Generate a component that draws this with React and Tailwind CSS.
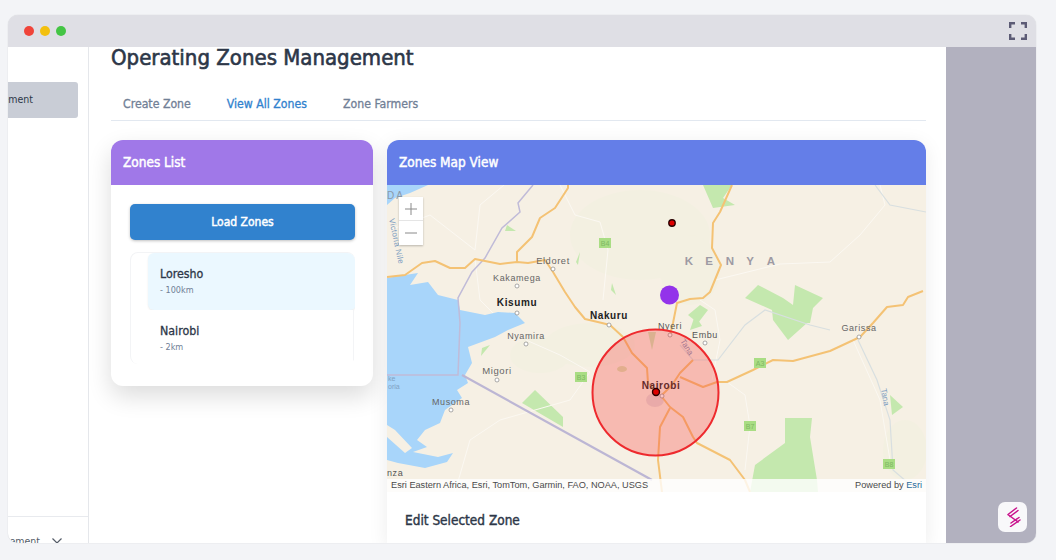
import React from 'react';

const roads = [
  'M387 277 L405 275 L422 263 L435 261 L450 268 L465 268 L475 259 L485 261 L500 264 L517 262 L528 263 L545 260 L553 272 L565 292 L575 307 L585 319 L602 323 L610 325 L623 337 L632 353 L647 368 L648 383 L655 392',
  'M517 262 L517 252 L532 237 L540 218 L555 208 L568 188 L568 185',
  'M732 185 L720 212 L713 223 L712 248 L721 265 L710 292 L703 298 L690 299 L677 303 L673 323 L670 335',
  'M693 360 L680 373 L672 385 L662 395',
  'M680 377 L703 387 L717 382 L727 382 L753 370 L773 360 L793 361 L830 351 L860 337 L873 323 L887 307 L903 305 L908 297 L923 291',
  'M662 397 L670 407 L683 417 L693 437 L697 443 L730 460 L745 480 L750 492',
  'M670 408 L660 427 L658 460 L662 492',
];

const whiteRoads = [
  'M560 185 L575 215 L600 222 L608 250 L603 300',
  'M390 230 L430 215 L475 250 L480 205 L510 180',
  'M475 259 L480 300 L505 325',
  'M526 340 L560 355 L590 372 L570 400 L500 420 L470 440 L455 492',
  'M727 382 L745 395 L750 426 L745 470',
  'M715 280 L780 264 L830 262 L860 235 L885 205 L880 185',
  'M853 340 L880 400 L890 460',
  'M700 300 L715 310 L720 340 L712 380',
];

const rivers = [
  'M858 340 L877 380 L890 420 L893 470 L907 482',
  'M680 345 L693 360 L718 360 L745 325 L765 310 L810 325 L830 330',
  'M875 185 L890 205 L926 212',
];

const terrain = [
  { cx: 640, cy: 235, rx: 70, ry: 45 },
  { cx: 590, cy: 345, rx: 45, ry: 22 },
  { cx: 690, cy: 270, rx: 30, ry: 35 },
  { cx: 540, cy: 355, rx: 30, ry: 18 },
  { cx: 905, cy: 450, rx: 22, ry: 30 },
];

const greens = [
  '703,185 732,185 723,198 735,205 713,208',
  '745,298 758,285 783,298 793,305 795,285 823,298 813,308 810,323 807,323 788,340 773,320 772,310',
  '785,418 812,418 810,437 817,480 818,492 750,492 755,465 785,443',
  '535,390 563,417 563,427 522,403',
  '700,305 708,310 698,323 688,315',
  '890,395 903,407 892,415',
  '695,315 702,326 690,330',
  '482,348 490,345 481,356',
  '507,225 516,231 505,231',
  '580,252 578,265 576,262',
  '612,283 616,295 611,290',
];

const shields = [
  { x: 605, y: 243, t: 'B4' },
  { x: 760, y: 363, t: 'A3' },
  { x: 750, y: 426, t: 'B7' },
  { x: 889, y: 464, t: 'B8' },
  { x: 581, y: 377, t: 'B3' },
];

const cities = [
  { x: 553, y: 264, t: 'Eldoret', dot: [553, 269], size: 9.3, cls: 'fill-[#666666]' },
  { x: 517, y: 281, t: 'Kakamega', dot: [517, 286], size: 9, cls: 'fill-[#666666]' },
  { x: 517, y: 306, t: 'Kisumu', dot: [517, 313], size: 10, cls: 'fill-[#222222] font-bold' },
  { x: 609, y: 319, t: 'Nakuru', dot: [609, 325], size: 10, cls: 'fill-[#222222] font-bold' },
  { x: 670, y: 329, t: 'Nyeri', dot: [670, 335], size: 9, cls: 'fill-[#555555]' },
  { x: 705, y: 338, t: 'Embu', dot: [705, 343], size: 9, cls: 'fill-[#555555]' },
  { x: 859, y: 331, t: 'Garissa', dot: [859, 337], size: 9, cls: 'fill-[#666666]' },
  { x: 526, y: 339, t: 'Nyamira', dot: [526, 344], size: 9, cls: 'fill-[#666666]' },
  { x: 497, y: 374, t: 'Migori', dot: [497, 380], size: 9.5, cls: 'fill-[#666666]' },
  { x: 451, y: 405, t: 'Musoma', dot: [451, 410], size: 9, cls: 'fill-[#666666]' },
  { x: 661, y: 389, t: 'Nairobi', dot: [662, 396], size: 10, cls: 'fill-[#222222] font-bold' },
];

const MapArt = () => (
  <svg viewBox="387 185 539 307" className="block w-[539px] h-[307px] font-['Liberation_Sans',sans-serif]">
    <rect x="387" y="185" width="539" height="307" fill="#f6f0e4" />
    {terrain.map((e) => (
      <ellipse key={e.cx} cx={e.cx} cy={e.cy} rx={e.rx} ry={e.ry} fill="#f3f0e1" />
    ))}
    {greens.map((p) => (
      <polygon key={p} points={p} fill="#c4e8ae" />
    ))}
    {whiteRoads.map((d) => (
      <path key={d} d={d} fill="none" stroke="#fbf8f2" strokeWidth="1" />
    ))}
    {rivers.map((d) => (
      <path key={d} d={d} fill="none" stroke="#d8dfe0" strokeWidth="1.2" />
    ))}
    {/* lake victoria */}
    <path
      d="M387 278 L405 275 L418 273 L410 285 L428 282 L438 295 L458 300 L460 310 L485 315 L498 312 L515 313 L525 323 L508 330 L495 337 L468 347 L472 363 L465 375 L468 383 L457 390 L462 398 L445 410 L440 423 L425 430 L417 440 L427 447 L413 452 L438 457 L453 453 L447 462 L425 468 L398 463 L387 460 L387 437 L405 453 L412 448 L395 430 L387 425 Z"
      fill="#a8d5fa"
    />
    <path d="M387 185 L428 185 L410 193 L395 198 L387 205 Z" fill="#a8d5fa" />
    {/* borders */}
    <path d="M533 185 L518 203 L520 212 L502 228 L485 258 L472 272 L458 298 L460 323 L458 375 L387 375" fill="none" stroke="#c0bbd8" strokeWidth="1.5" />
    <path d="M462 375 L652 480" fill="none" stroke="#bcb6d4" strokeWidth="2.2" />
    {/* nairobi built up area and the patches under the zone */}
    <ellipse cx="655" cy="400" rx="9" ry="7" fill="#e3d9d8" />
    <polygon points="648,332 656,332 652,350" fill="#cfe3b5" />
    <ellipse cx="622" cy="369" rx="5" ry="3" fill="#d8dfb0" />
    {roads.map((d) => (
      <path key={d} d={d} fill="none" stroke="#f4c274" strokeWidth="2" strokeLinejoin="round" />
    ))}
    {shields.map((s) => (
      <g key={s.t}>
        <rect x={s.x - 6} y={s.y - 5} width="12" height="10" fill="#a9dd84" />
        <text x={s.x} y={s.y + 3} textAnchor="middle" fontSize="7" fill="#7fb763">{s.t}</text>
      </g>
    ))}
    <text x="396" y="199" textAnchor="middle" fontSize="10" letterSpacing="2" fill="#8b99a8">DA</text>
    <text x="0" y="0" fontSize="8" letterSpacing="0.3" fill="#7b9cc0" transform="translate(389 219) rotate(78)">Victoria Nile</text>
    <text x="388" y="381" fontSize="7" fill="#7fa2c4">ke</text>
    <text x="388" y="389" fontSize="7" fill="#7fa2c4">oria</text>
    <text x="387" y="476" fontSize="9" letterSpacing="0.6" fill="#555555">nza</text>
    <text x="0" y="0" fontSize="8" fill="#7f8fb5" transform="translate(680 341) rotate(58)">Tana</text>
    <text x="0" y="0" fontSize="8" fill="#7b9cc0" transform="translate(881 389) rotate(80)">Tana</text>
    <text x="689" y="265" textAnchor="middle" fontSize="11.5" fontWeight="700" fill="#9d9aa3">K</text>
    <text x="709" y="265" textAnchor="middle" fontSize="11.5" fontWeight="700" fill="#9d9aa3">E</text>
    <text x="730" y="265" textAnchor="middle" fontSize="11.5" fontWeight="700" fill="#9d9aa3">N</text>
    <text x="750" y="265" textAnchor="middle" fontSize="11.5" fontWeight="700" fill="#9d9aa3">Y</text>
    <text x="771" y="265" textAnchor="middle" fontSize="11.5" fontWeight="700" fill="#9d9aa3">A</text>
    {cities.map((c) => (
      <g key={c.t}>
        <text x={c.x} y={c.y} textAnchor="middle" fontSize={c.size} letterSpacing="0.6" className={c.cls}>{c.t}</text>
        <circle cx={c.dot[0]} cy={c.dot[1]} r="2" fill="#fff" stroke="#888" strokeWidth="0.7" />
      </g>
    ))}
    <circle cx="655.5" cy="392.5" r="63" fill="#f8403a" fillOpacity="0.3" stroke="#ee2a2e" strokeWidth="2" />
    <circle cx="669.5" cy="295" r="9.5" fill="#9333ea" />
    <circle cx="672" cy="223" r="3.2" fill="#dd0000" stroke="#2a0000" strokeWidth="1.4" />
    <circle cx="656" cy="392" r="3.5" fill="#dd0000" stroke="#2a0000" strokeWidth="1.4" />
  </svg>
);

const Dots = () => (
  <div className="flex gap-[6px]">
    <span className="w-[10px] h-[10px] rounded-full bg-[#f0443a]" />
    <span className="w-[10px] h-[10px] rounded-full bg-[#f3c00f]" />
    <span className="w-[10px] h-[10px] rounded-full bg-[#44c545]" />
  </div>
);

const ExpandIcon = () => (
  <svg width="18" height="18" viewBox="0 0 18 18" fill="none" stroke="#5c5b75" strokeWidth="2.4">
    <path d="M1.2 6V1.2H6M12 1.2H16.8V6M16.8 12V16.8H12M6 16.8H1.2V12" />
  </svg>
);

const LogoMark = () => (
  <svg width="18" height="20" viewBox="0 0 18 20" fill="none" stroke="#c9118c" strokeWidth="1.5" strokeLinecap="round">
    <path d="M12.5 1 L4 7.5 M14 3.5 L6 9.5" />
    <path d="M4.5 8 L14 15" />
    <path d="M15 10.5 L7 16 M16 13 L6.5 19.5" />
  </svg>
);

export default function App() {
  return (
    <div className="h-[560px] w-[1056px] bg-[#f3f4f7] pt-[15px] px-2 overflow-hidden font-['DejaVu_Sans_Condensed','DejaVu_Sans',sans-serif]">
      <div className="relative w-[1028px] h-[528px] rounded-[10px] overflow-hidden flex flex-col shadow-[0_0_1px_rgba(0,0,0,0.25)]">
        <div className="h-8 shrink-0 bg-[#dfdfe5] flex items-center justify-between pl-4 pr-[9px]">
          <Dots />
          <ExpandIcon />
        </div>

        <div className="flex flex-1 min-h-0">
          {/* sidebar, scrolled sideways */}
          <aside className="w-[81px] shrink-0 bg-white border-r border-[#e5e7eb] flex flex-col justify-between overflow-hidden">
            <div className="pt-[35px] pr-[10px]">
              <div className="h-9 bg-[#c9cdd6] rounded-r-[3px] flex items-center justify-end pr-[45px] overflow-hidden">
                <span className="text-[10.5px] text-[#2d3748] whitespace-nowrap">Zone Management</span>
              </div>
            </div>
            <div className="h-[27px] border-t border-[#e8eaee] flex items-end justify-end pr-[26px] gap-[12px] overflow-hidden">
              <span className="text-[10.5px] leading-[11px] text-[#555c68] whitespace-nowrap -mb-[4px]">Management</span>
              <svg width="10" height="6" viewBox="0 0 10 6" fill="none" stroke="#555c68" strokeWidth="1.2" className="shrink-0 -mb-[1px]">
                <path d="M0.5 0.5 L5 5 L9.5 0.5" />
              </svg>
            </div>
          </aside>

          <main className="w-[857px] shrink-0 bg-white pl-[22px] pr-5 overflow-hidden">
            <h1 className="text-[22px] leading-[22px] text-[#2d3748] whitespace-nowrap [-webkit-text-stroke:0.6px_#2d3748]">Operating Zones Management</h1>
            <nav className="mt-[14px] flex border-b border-[#e2e8f0] h-[38px] items-center pl-3 pt-[6px] gap-9 text-[12.2px] text-[#718096] [-webkit-text-stroke:0.3px]">
              <span>Create Zone</span>
              <span className="text-[#3182ce]">View All Zones</span>
              <span>Zone Farmers</span>
            </nav>

            <div className="mt-[19px] flex items-start gap-[14px]">
              <section className="w-[262px] shrink-0 bg-white rounded-xl overflow-hidden shadow-[0_10px_25px_rgba(0,0,0,0.14)]">
                <div className="h-[45px] bg-[#a078e8] flex items-center px-3 text-[13.5px] text-white [-webkit-text-stroke:0.45px_white]">Zones List</div>
                <div className="pt-[19px] pl-[19px] pr-[18px] pb-[22px]">
                  <button className="w-full h-9 rounded-[5px] bg-[#3182ce] text-white text-xs [-webkit-text-stroke:0.45px_white] shadow-[0_1px_3px_rgba(0,0,0,0.25)]">Load Zones</button>
                  <ul className="mt-3 h-[112px] overflow-hidden pl-[17px] rounded-lg border-t border-l border-[#f3f4f6]">
                    <li className="h-[57px] -mr-[1px] bg-[#ebf8ff] rounded-md px-3 pt-[13px] shadow-[0_1px_2px_rgba(0,0,0,0.08)]">
                      <p className="text-[12.3px] leading-4 text-[#2d3748] [-webkit-text-stroke:0.3px]">Loresho</p>
                      <p className="mt-[2px] text-[9px] leading-3 text-[#718096]">- 100km</p>
                    </li>
                    <li className="h-[57px] mr-[1px] border-r border-[#f3f4f6] bg-white px-3 pt-[13px]">
                      <p className="text-[12.3px] leading-4 text-[#2d3748] [-webkit-text-stroke:0.3px]">Nairobi</p>
                      <p className="mt-[2px] text-[9px] leading-3 text-[#718096]">- 2km</p>
                    </li>
                  </ul>
                </div>
              </section>

              <section className="w-[539px] shrink-0 bg-white rounded-t-xl overflow-hidden shadow-[0_4px_20px_rgba(0,0,0,0.08)]">
                <div className="h-[45px] bg-[#647ee8] flex items-center px-3 text-[13.5px] text-white [-webkit-text-stroke:0.45px_white]">Zones Map View</div>
                <div className="relative h-[307px] overflow-hidden">
                  <MapArt />
                  {/* zoom control */}
                  <div className="absolute left-3 top-3 w-6 h-12 bg-white shadow-[0_1px_2px_rgba(0,0,0,0.25)] flex flex-col text-[#777]">
                    <div className="h-6 border-b border-[#e5e5e5] flex items-center justify-center">
                      <svg width="12" height="12" viewBox="0 0 12 12" stroke="#8a8a8a" strokeWidth="1"><path d="M6 0V12M0 6H12" /></svg>
                    </div>
                    <div className="h-6 flex items-center justify-center">
                      <svg width="12" height="12" viewBox="0 0 12 12" stroke="#8a8a8a" strokeWidth="1"><path d="M0 6H12" /></svg>
                    </div>
                  </div>
                  <div className="absolute left-0 right-0 bottom-0 h-[13px] bg-white/80 flex items-center justify-between px-1 font-['Liberation_Sans',sans-serif] text-[9.2px] text-[#4a4a4a]">
                    <span>Esri Eastern Africa, Esri, TomTom, Garmin, FAO, NOAA, USGS</span>
                    <span>Powered by <span className="text-[#2c6c9c]">Esri</span></span>
                  </div>
                </div>
                <div className="h-[52px] px-[18px] pt-5">
                  <h3 className="text-[13.5px] leading-4 text-[#2d3748] [-webkit-text-stroke:0.4px]">Edit Selected Zone</h3>
                </div>
              </section>
            </div>
          </main>

          <div className="flex-1 bg-[#b2b1bf]" />
        </div>

        <div className="absolute right-[9px] bottom-[11px] w-[29px] h-[30px] rounded-[7px] bg-[#f8f8fa] flex items-center justify-center">
          <LogoMark />
        </div>
      </div>
    </div>
  );
}
